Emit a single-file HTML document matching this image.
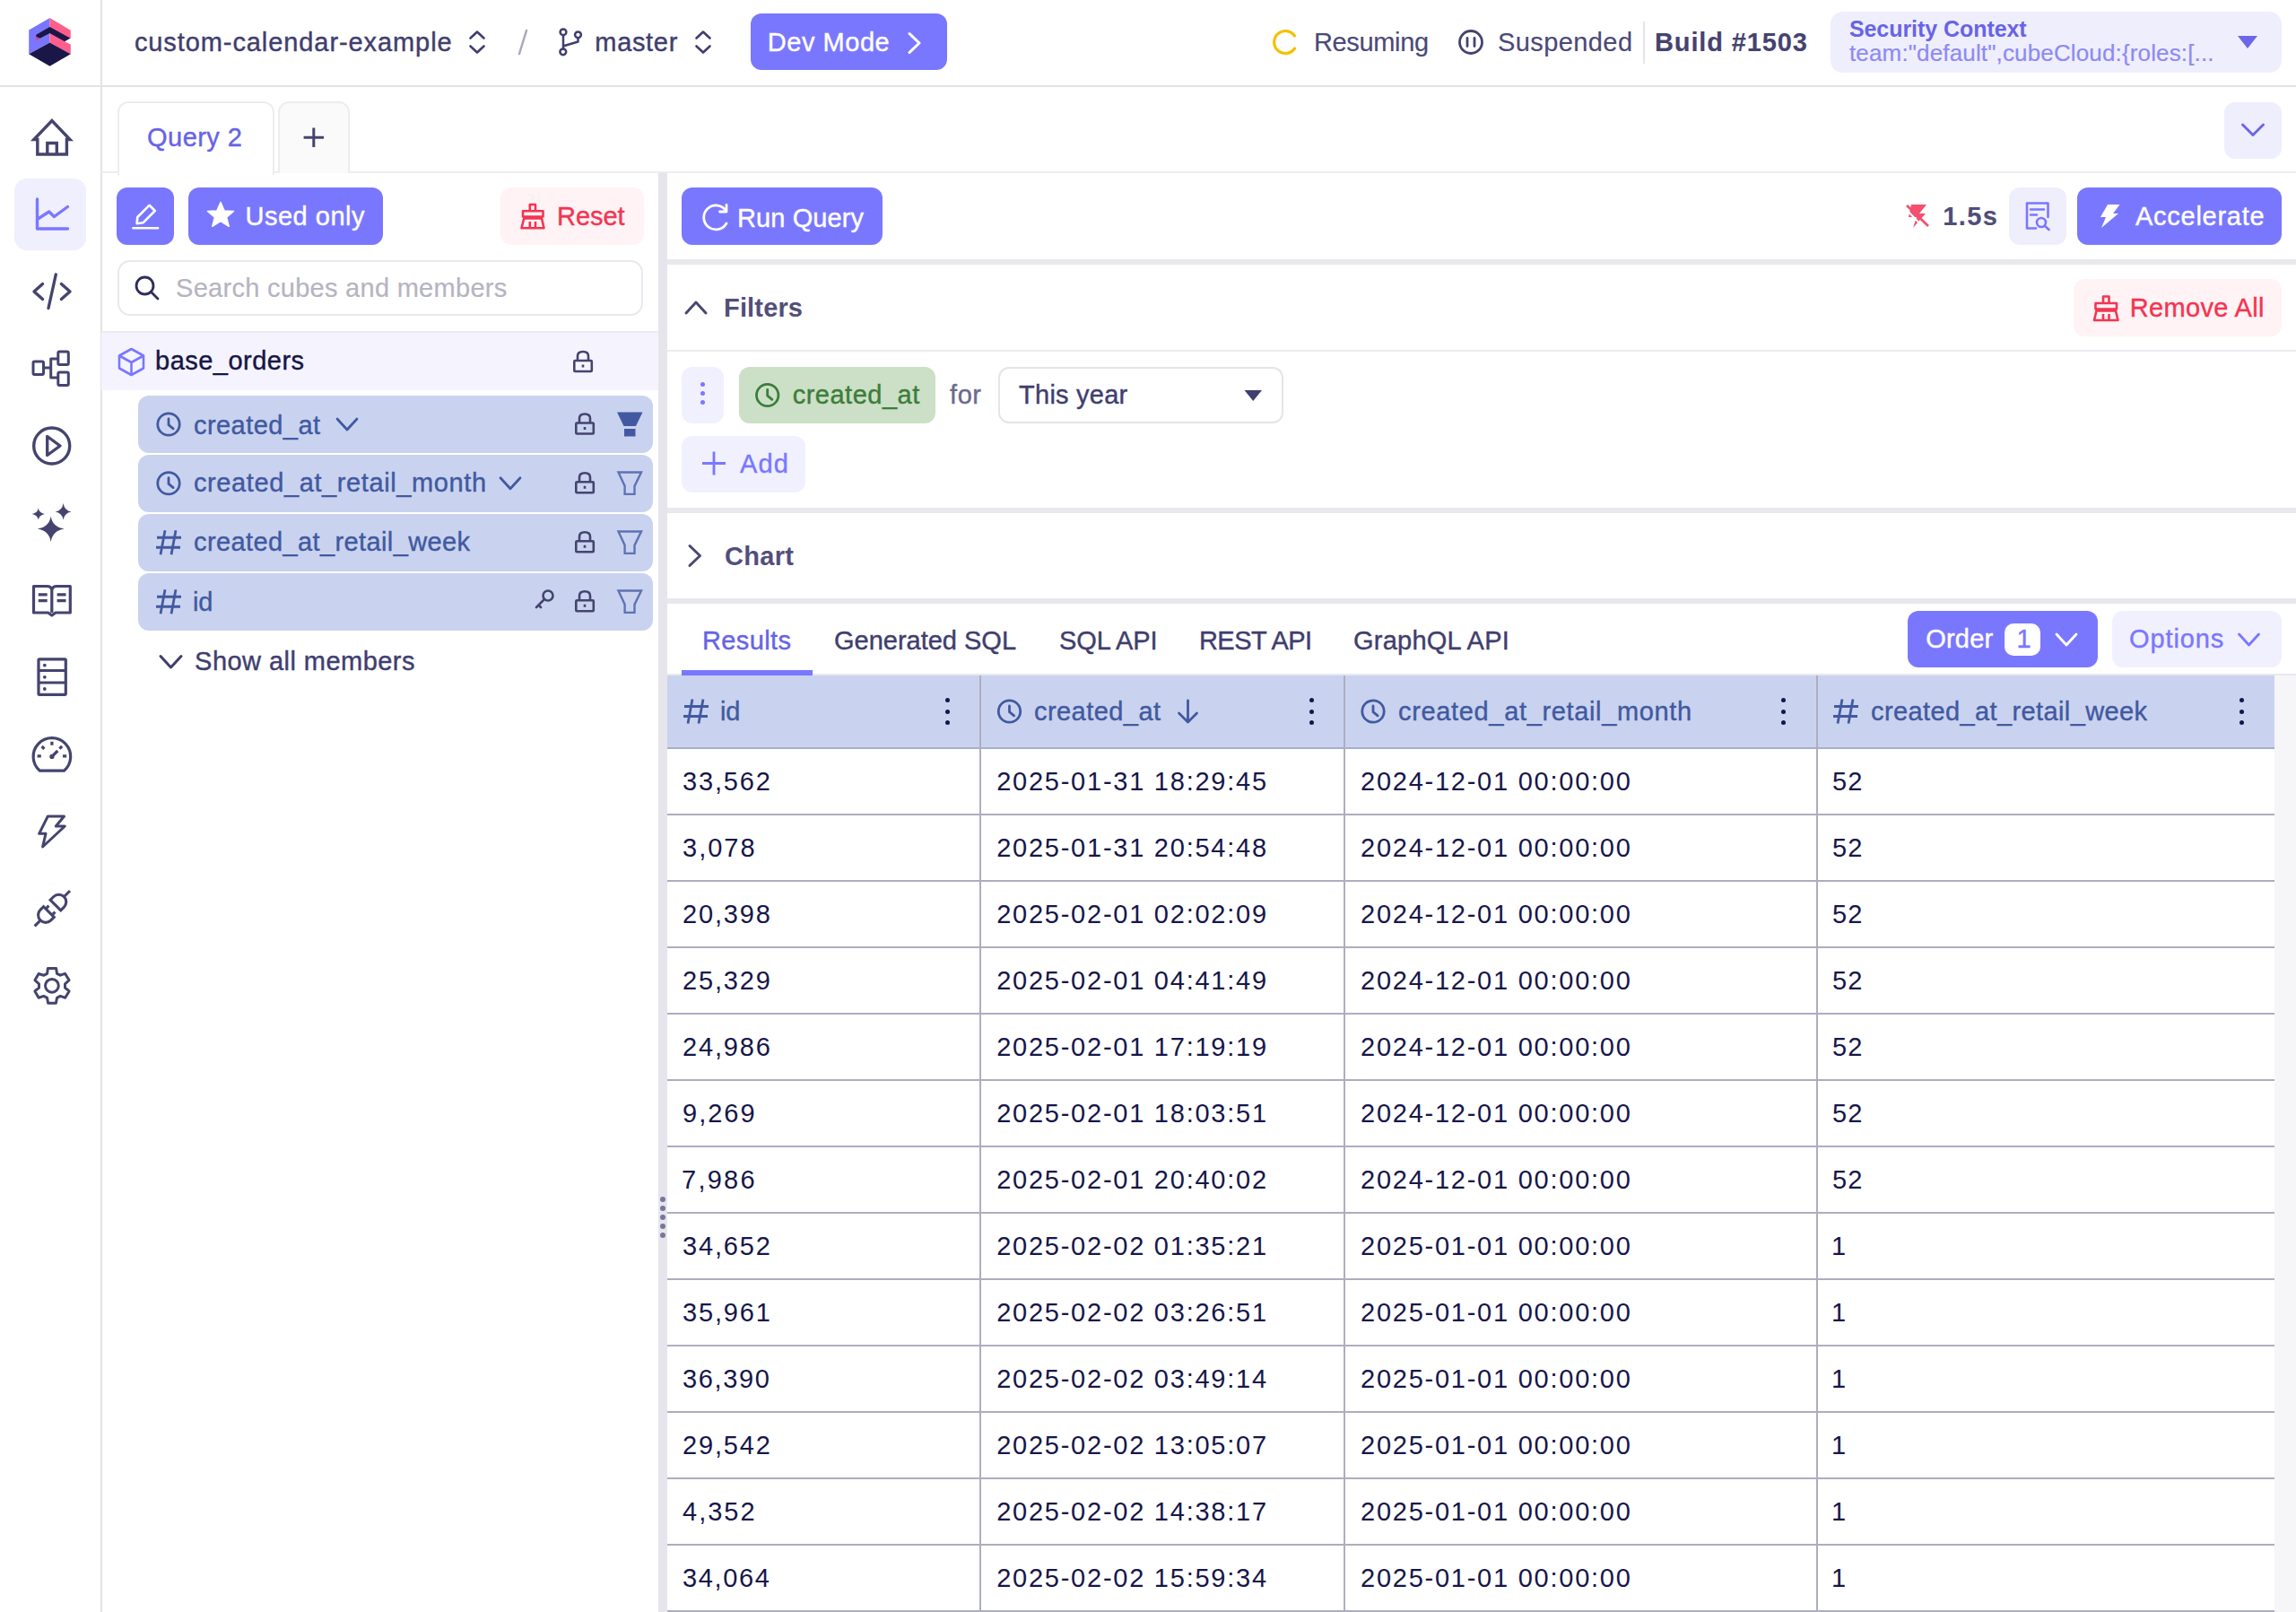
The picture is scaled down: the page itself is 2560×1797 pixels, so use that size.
<!DOCTYPE html>
<html><head><meta charset="utf-8">
<style>
html,body{margin:0;padding:0;width:2560px;height:1797px;overflow:hidden;background:#fff;font-family:"Liberation Sans",sans-serif;}
.a{position:absolute;}
.t{position:absolute;white-space:nowrap;font-size:28px;line-height:32px;letter-spacing:1px;-webkit-text-stroke:0.4px currentColor;}
.b{font-weight:bold;}
.bm{display:inline-block;width:0;height:0;}
svg{position:absolute;overflow:visible;}
</style></head><body>
<!-- HEADER -->
<div class="a" style="left:0;top:95px;width:2560px;height:2px;background:#E3E3E6"></div>
<div class="a" style="left:112px;top:0;width:2px;height:1797px;background:#E3E3E6"></div>
<svg style="left:0;top:0" width="113" height="94">
  <polygon points="55.5,20 32.2,33.5 32.2,60.2 55.5,47.5" fill="#7A76FF"/>
  <polygon points="55.5,20 78.8,33.7 78.8,60.2 55.5,47.5" fill="#FF5F8C"/>
  <polygon points="32.2,60.2 55.5,47.5 78.8,60.2 55.5,73.7" fill="#1A1748"/>
  <polygon points="40.3,38.7 55.5,30 78.3,42.6 72.2,46.2 55.5,37 44.5,42.8 40.3,41" fill="#1A1748"/>
  <polygon points="40.3,41 44.5,42.8 40.3,45.6" fill="#D9466A"/>
  <polygon points="79.5,42.2 72.2,46.2 79.5,50" fill="#fff"/>
</svg>
<svg style="left:0;top:0" width="1" height="1"><path d="M524.5,42.5 L532,35.5 L539.5,42.5 M524.5,51.5 L532,58.5 L539.5,51.5" fill="none" stroke="#403E6E" stroke-width="2.6" stroke-linecap="round" stroke-linejoin="round"/></svg>
<svg style="left:0;top:0" width="1" height="1"><path d="M587,34 L579,60" fill="none" stroke="#A9A8BC" stroke-width="2.5" stroke-linecap="round"/></svg>
<svg style="left:0;top:0" width="1" height="1" fill="none" stroke="#403E6E" stroke-width="2.5" stroke-linecap="round" stroke-linejoin="round">
  <circle cx="628" cy="35.8" r="3.4"/><circle cx="627.8" cy="57.8" r="3.4"/><circle cx="644.5" cy="38.8" r="3.4"/>
  <path d="M628,39.2 V54.4 M644.5,42.2 V46.5 L628.5,51.2"/>
</svg>
<svg style="left:0;top:0" width="1" height="1"><path d="M776.5,42.5 L784,35.5 L791.5,42.5 M776.5,51.5 L784,58.5 L791.5,51.5" fill="none" stroke="#403E6E" stroke-width="2.6" stroke-linecap="round" stroke-linejoin="round"/></svg>
<div class="a" style="left:837px;top:15px;width:219px;height:63px;background:#7A77FF;border-radius:12px"></div>
<svg style="left:0;top:0" width="1" height="1"><path d="M1014,37.5 L1025,48 L1014,58.5" fill="none" stroke="#fff" stroke-width="3" stroke-linecap="round" stroke-linejoin="round"/></svg>

<svg style="left:0;top:0" width="1" height="1"><path d="M1443.5,40 A12.5,12.5 0 1 0 1443.5,54" fill="none" stroke="#F5C000" stroke-width="3.2" stroke-linecap="round"/></svg>
<svg style="left:0;top:0" width="1" height="1" fill="none" stroke="#45436F" stroke-width="2.8" stroke-linecap="round"><circle cx="1640" cy="47" r="12.5"/><path d="M1636,42.5 V51.5 M1644,42.5 V51.5"/></svg>
<div class="a" style="left:1832px;top:24px;width:2px;height:47px;background:#E4E4EA"></div>
<div class="a" style="left:2041px;top:13px;width:503px;height:68px;background:#EFEEFD;border-radius:14px"></div>
<svg style="left:0;top:0" width="1" height="1"><path d="M2495,40 L2517,40 L2506,54 Z" fill="#6B67E8"/></svg>

<!-- SIDEBAR -->
<div class="a" style="left:16px;top:199px;width:80px;height:80px;background:#F0EFFD;border-radius:14px"></div>
<svg style="left:0;top:0" width="1" height="1" fill="none" stroke="#45446F" stroke-width="3.4" stroke-linejoin="miter" stroke-linecap="butt">
  <path d="M41.8,155.5 H37.8 L57.9,134.5 L78,155.5 H74.4 V172 H41.8 Z M52.8,172 V159.5 H63.3 V172"/>
</svg>
<svg style="left:0;top:0" width="1" height="1" fill="none" stroke="#7A77FF" stroke-width="3.4" stroke-linecap="round" stroke-linejoin="round">
  <path d="M41.5,222 V255 H75.5 M41.5,244.5 L54.7,236 L60.4,241.5 L75.4,230.5"/>
</svg>
<svg style="left:0;top:0" width="1" height="1" fill="none" stroke="#45446F" stroke-width="3.4" stroke-linecap="round" stroke-linejoin="round">
  <path d="M47.5,316.5 L38,325 L47.5,333.5 M68.4,316.5 L78,325 L68.4,333.5 M62.3,306 L54,343.5"/>
</svg>
<svg style="left:0;top:0" width="1" height="1" fill="none" stroke="#45446F" stroke-width="3" stroke-linejoin="round">
  <rect x="37" y="403" width="11.5" height="14.5" rx="1.5"/>
  <rect x="64.8" y="392" width="11.5" height="14.5" rx="1.5"/>
  <rect x="64.8" y="415" width="11.5" height="14.5" rx="1.5"/>
  <path d="M48.5,410 H56.7 M64.8,400 H56.7 V421 H64.8"/>
</svg>
<svg style="left:0;top:0" width="1" height="1" fill="none" stroke="#45446F" stroke-width="3.4" stroke-linejoin="round">
  <circle cx="57.7" cy="497" r="20"/>
  <path d="M52.7,486.5 L67,497 L52.7,507.5 Z"/>
</svg>
<svg style="left:0;top:0" width="1" height="1" fill="#45446F">
  <path d="M56.7,575.5 Q58.5,587.5 71.6,589.5 Q58.5,591.5 56.7,604.3 Q54.9,591.5 41.8,589.5 Q54.9,587.5 56.7,575.5 Z"/>
  <path d="M70.6,561 Q71.8,569.2 79.5,570.6 Q71.8,572 70.6,579.5 Q69.4,572 61.6,570.6 Q69.4,569.2 70.6,561 Z"/>
  <path d="M42.8,566.5 Q43.6,571.7 49.7,573 Q43.6,574.3 42.8,579.5 Q42,574.3 35.8,573 Q42,571.7 42.8,566.5 Z"/>
</svg>
<svg style="left:0;top:0" width="1" height="1" fill="none" stroke="#45446F" stroke-width="3.2" stroke-linejoin="round">
  <path d="M37.5,653.5 H52 Q57.5,653.5 57.8,658 Q58.2,653.5 63.5,653.5 H78.3 V683 H62 L57.8,686 L53.6,683 H37.5 Z M57.8,658 V683"/>
  <path d="M42.8,662.8 H52.7 M42.8,669.7 H52.7 M63.6,662.8 H73.5 M63.6,669.7 H73.5"/>
</svg>
<svg style="left:0;top:0" width="1" height="1" fill="none" stroke="#45446F" stroke-width="3.2" stroke-linejoin="round">
  <rect x="43" y="734.8" width="30.3" height="39.5" rx="1"/>
  <path d="M43,747.5 H73.3 M43,761 H73.3"/>
  <circle cx="49.8" cy="741.6" r="1.9" fill="#45446F" stroke="none"/><circle cx="49.8" cy="754.8" r="1.9" fill="#45446F" stroke="none"/><circle cx="49.8" cy="768" r="1.9" fill="#45446F" stroke="none"/>
</svg>
<svg style="left:0;top:0" width="1" height="1" fill="none" stroke="#45446F" stroke-width="3.2" stroke-linecap="butt" stroke-linejoin="round">
  <path d="M44.4,859.2 A20.8,20.8 0 1 1 71.4,859.2 Z"/>
  <path d="M57.9,826.8 V830.8 M41.6,842.9 H45.8 M70,842.9 H74.2 M46.6,832 L49.4,834.8 M66.4,834.6 L69.2,831.8 M57.9,843.4 L64.3,837"/>
  <circle cx="57.9" cy="843.4" r="2.6" fill="#45446F" stroke="none"/>
</svg>
<svg style="left:0;top:0" width="1" height="1" fill="none" stroke="#45446F" stroke-width="3" stroke-linejoin="round">
  <path d="M53.3,910 H71.5 L62.3,921 H72.3 L47.6,944 L51,929.3 H43.6 Z"/>
</svg>
<svg style="left:0;top:0" width="1" height="1" fill="none" stroke="#45446F" stroke-width="1.33" stroke-linecap="butt" stroke-linejoin="miter"><g transform="translate(30.24,984.84) scale(2.33)">
<path d="M7.89 11.11l5 5l-1.5 1.5a3.536 3.536 0 1 1 -5 -5l1.5 -1.5z"/><path d="M16.11 12.89l-5 -5l1.5 -1.5a3.536 3.536 0 1 1 5 5l-1.5 1.5z"/><path d="M3.6 20.4L6.39 17.61"/><path d="M17.61 6.39L20.5 3.5"/><path d="M10.39 10.61l-1.5 1.5"/><path d="M13.39 13.61l-1.5 1.5"/></g></svg>
<svg style="left:0;top:0" width="1" height="1" fill="none" stroke="#45446F" stroke-width="3" stroke-linejoin="round">
  <path d="M53.4,1079.4 H62.6 L63.5,1085.3 L67.2,1087.2 L72.5,1085.3 L77.1,1092.7 L72.5,1096.8 V1101 L77.1,1104.9 L72.7,1112.2 L67.2,1110.4 L63.5,1112.4 L62.4,1118.3 H53.6 L52.6,1112.4 L48.7,1110.4 L43.1,1112.2 L38.9,1104.9 L43.5,1101 V1096.8 L38.9,1092.7 L43.1,1085.5 L48.7,1087.3 L52.6,1085.3 Z"/>
  <circle cx="57.9" cy="1098.8" r="7.4"/>
</svg>

<!-- TABS -->
<div class="a" style="left:113px;top:191px;width:2447px;height:2px;background:#EDEDF0"></div>
<div class="a" style="left:131px;top:113px;width:171px;height:80px;background:#fff;border:2px solid #EDEDF0;border-bottom:none;border-radius:12px 12px 0 0;box-sizing:content-box"></div>
<div class="a" style="left:310px;top:113px;width:76px;height:78px;background:#FAFAFB;border:2px solid #EDEDF0;border-bottom:none;border-radius:12px 12px 0 0"></div>
<svg style="left:0;top:0" width="1" height="1"><path d="M338.6,153.2 H361 M349.8,142.4 V164.1" fill="none" stroke="#45446F" stroke-width="3"/></svg>
<div class="a" style="left:2480px;top:114px;width:64px;height:63px;background:#EFEEFD;border-radius:12px"></div>
<svg style="left:0;top:0" width="1" height="1"><path d="M2500.5,139 L2512,150.5 L2523.5,139" fill="none" stroke="#6B67E8" stroke-width="3" stroke-linecap="round" stroke-linejoin="round"/></svg>

<!-- LEFT PANEL -->
<div class="a" style="left:130px;top:209px;width:64px;height:64px;background:#7A77FF;border-radius:12px"></div>
<svg style="left:0;top:0" width="1" height="1" fill="none" stroke="#fff" stroke-width="2.6" stroke-linejoin="round" stroke-linecap="round">
  <path d="M166.5,228.8 L172.8,235 L159.5,248.3 L152.6,249.2 L153.3,242 Z"/>
  <path d="M148.5,254.3 H176"/>
</svg>
<div class="a" style="left:210px;top:209px;width:217px;height:64px;background:#7A77FF;border-radius:12px"></div>
<svg style="left:0;top:0" width="1" height="1"><path d="M246,225.5 L250.2,235 L260.5,235.5 L252.6,242.2 L255.2,252.3 L246,246.7 L236.8,252.3 L239.4,242.2 L231.5,235.5 L241.8,235 Z" fill="#fff" stroke="#fff" stroke-width="1.5" stroke-linejoin="round"/></svg>
<div class="a" style="left:558px;top:209px;width:160px;height:64px;background:#FFF3F5;border-radius:12px"></div>
<svg style="left:0;top:0" width="1" height="1" fill="none" stroke="#F33551" stroke-width="2.6" stroke-linejoin="round">
  <path d="M590.8,235.3 V228 H597 V235.3 M583,235.3 H605.5 V241.5 H583 Z M584.2,243.5 H604 L606.5,254.2 H581.5 Z M590.8,247 V254 M597,247 V254"/>
</svg>
<div class="a" style="left:131px;top:290px;width:582px;height:58px;border:2px solid #E8E8EE;border-radius:14px"></div>
<svg style="left:0;top:0" width="1" height="1" fill="none" stroke="#2F2D5C" stroke-width="2.8" stroke-linecap="round"><circle cx="161.5" cy="318.5" r="9.5"/><path d="M168.5,325.5 L176,333"/></svg>
<div class="a" style="left:113px;top:369px;width:621px;height:2px;background:#EBEBF0"></div>
<div class="a" style="left:113px;top:371px;width:621px;height:64px;background:#F5F4FE"></div>
<svg style="left:0;top:0" width="1" height="1" fill="none" stroke="#7A77FF" stroke-width="2.6" stroke-linejoin="round">
  <path d="M146.5,389 L160,396.5 V410.5 L146.5,418 L133,410.5 V396.5 Z M133,396.5 L146.5,404 L160,396.5 M146.5,404 V418"/>
</svg>
<svg style="left:0;top:0" width="1" height="1" fill="none" stroke="#45446F" stroke-width="2.6"><rect x="640.3" y="402" width="19.5" height="12" rx="1"/><path d="M644,402 V397 Q644,392 650,392 Q656,392 656,397 V402 M650,406.5 V409.5"/></svg>

<div class="a" style="left:154px;top:441px;width:574px;height:64px;background:#C9D3EF;border-radius:12px"></div>
<svg style="left:0;top:0" width="1" height="1" fill="none" stroke="#4259A1" stroke-width="2.8" stroke-linecap="round"><circle cx="188" cy="473.0" r="12.2"/><path d="M188,466.9 V473.61 L193.124,477.88"/></svg>
<svg style="left:0;top:0" width="1" height="1"><path d="M376,467.0 L387.0,479.0 L398,467.0" fill="none" stroke="#4259A1" stroke-width="2.8" stroke-linecap="round" stroke-linejoin="round"/></svg>
<svg style="left:0;top:0" width="1" height="1" fill="none" stroke="#45446F" stroke-width="2.6"><rect x="642.3" y="471.5" width="19.5" height="12" rx="1"/><path d="M646,471.5 V466.5 Q646,461.5 652,461.5 Q658,461.5 658,466.5 V471.5 M652,476.0 V479.0"/></svg>
<svg style="left:0;top:0" width="1" height="1" fill="#4259A1"><path d="M688,459.5 H716.5 L709,475.0 H695.5 Z"/><rect x="696" y="478.0" width="12.5" height="8.5"/></svg>
<div class="a" style="left:154px;top:507px;width:574px;height:63.5px;background:#C9D3EF;border-radius:12px"></div>
<svg style="left:0;top:0" width="1" height="1" fill="none" stroke="#4259A1" stroke-width="2.8" stroke-linecap="round"><circle cx="188" cy="538.75" r="12.2"/><path d="M188,532.65 V539.36 L193.124,543.63"/></svg>
<svg style="left:0;top:0" width="1" height="1"><path d="M558,532.75 L569.0,544.75 L580,532.75" fill="none" stroke="#4259A1" stroke-width="2.8" stroke-linecap="round" stroke-linejoin="round"/></svg>
<svg style="left:0;top:0" width="1" height="1" fill="none" stroke="#45446F" stroke-width="2.6"><rect x="642.3" y="537.25" width="19.5" height="12" rx="1"/><path d="M646,537.25 V532.25 Q646,527.25 652,527.25 Q658,527.25 658,532.25 V537.25 M652,541.75 V544.75"/></svg>
<svg style="left:0;top:0" width="1" height="1" fill="none" stroke="#5F72B4" stroke-width="2.4" stroke-linejoin="miter"><path d="M689.5,526.55 H715 L707.5,541.85 V550.85 H696.6 V541.85 Z"/></svg>
<div class="a" style="left:154px;top:573px;width:574px;height:63.5px;background:#C9D3EF;border-radius:12px"></div>
<svg style="left:0;top:0" width="1" height="1" fill="none" stroke="#4259A1" stroke-width="2.8" stroke-linecap="butt"><path d="M184.0,591.25 L179.0,618.25 M196.0,591.25 L191.0,618.25 M175.0,599.25 H202.0 M174,610.25 H201.0"/></svg>
<svg style="left:0;top:0" width="1" height="1" fill="none" stroke="#45446F" stroke-width="2.6"><rect x="642.3" y="603.25" width="19.5" height="12" rx="1"/><path d="M646,603.25 V598.25 Q646,593.25 652,593.25 Q658,593.25 658,598.25 V603.25 M652,607.75 V610.75"/></svg>
<svg style="left:0;top:0" width="1" height="1" fill="none" stroke="#5F72B4" stroke-width="2.4" stroke-linejoin="miter"><path d="M689.5,592.55 H715 L707.5,607.85 V616.85 H696.6 V607.85 Z"/></svg>
<div class="a" style="left:154px;top:639px;width:574px;height:63.5px;background:#C9D3EF;border-radius:12px"></div>
<svg style="left:0;top:0" width="1" height="1" fill="none" stroke="#4259A1" stroke-width="2.8" stroke-linecap="butt"><path d="M184.0,657.25 L179.0,684.25 M196.0,657.25 L191.0,684.25 M175.0,665.25 H202.0 M174,676.25 H201.0"/></svg>
<svg style="left:0;top:0" width="1" height="1" fill="none" stroke="#45446F" stroke-width="2.6"><rect x="642.3" y="669.25" width="19.5" height="12" rx="1"/><path d="M646,669.25 V664.25 Q646,659.25 652,659.25 Q658,659.25 658,664.25 V669.25 M652,673.75 V676.75"/></svg>
<svg style="left:0;top:0" width="1" height="1" fill="none" stroke="#5F72B4" stroke-width="2.4" stroke-linejoin="miter"><path d="M689.5,658.55 H715 L707.5,673.85 V682.85 H696.6 V673.85 Z"/></svg>
<svg style="left:0;top:0" width="1" height="1" fill="none" stroke="#45446F" stroke-width="2.6" stroke-linecap="round"><circle cx="611" cy="664" r="5.5"/><path d="M607,668 L598,677 M600.5,674.5 L603,677"/></svg>
<svg style="left:0;top:0" width="1" height="1"><path d="M179,731.5 L190.5,744 L202,731.5" fill="none" stroke="#403E6E" stroke-width="3" stroke-linecap="round" stroke-linejoin="round"/></svg>
<div class="a" style="left:734px;top:193px;width:10px;height:1604px;background:#E6E5EC"></div>
<div class="a" style="left:736px;top:1334px;width:6px;height:6px;border-radius:3px;background:#77769B"></div>
<div class="a" style="left:736px;top:1344px;width:6px;height:6px;border-radius:3px;background:#77769B"></div>
<div class="a" style="left:736px;top:1354px;width:6px;height:6px;border-radius:3px;background:#77769B"></div>
<div class="a" style="left:736px;top:1364px;width:6px;height:6px;border-radius:3px;background:#77769B"></div>
<div class="a" style="left:736px;top:1374px;width:6px;height:6px;border-radius:3px;background:#77769B"></div>
<div class="a" style="left:760px;top:209px;width:224px;height:64px;background:#7A77FF;border-radius:12px"></div>
<svg style="left:0;top:0" width="1" height="1" fill="none" stroke="#fff" stroke-width="2.8" stroke-linecap="round" stroke-linejoin="round"><path d="M809.5,235 A13.5,13.5 0 1 0 810,249"/><path d="M810,228.5 V236 H802.5"/></svg>
<svg style="left:0;top:0" width="1" height="1"><path d="M2131,228 H2148 L2140,238 H2147 L2133,254 L2137,242 H2128 Z" fill="#F2506E"/><path d="M2126,229 L2150,252" stroke="#F2506E" stroke-width="2.8"/><path d="M2124,232 L2146,255" stroke="#fff" stroke-width="2"/></svg>
<div class="a" style="left:2240px;top:209px;width:64px;height:64px;background:#EFEEFD;border-radius:12px"></div>
<svg style="left:0;top:0" width="1" height="1" fill="none" stroke="#7A77FF" stroke-width="2.6" stroke-linejoin="round" stroke-linecap="round"><path d="M2270,254.5 H2260 V226.5 H2283.5 V242"/><path d="M2264,233.5 H2279 M2264,239.5 H2271"/><circle cx="2276" cy="248" r="5"/><path d="M2280,252 L2284.5,256"/></svg>
<div class="a" style="left:2316px;top:209px;width:228px;height:64px;background:#7A77FF;border-radius:12px"></div>
<svg style="left:0;top:0" width="1" height="1"><path d="M2350,228 H2363.5 L2356,238 H2362 L2343,254 L2348,242 H2342 Z" fill="#fff"/></svg>
<div class="a" style="left:744px;top:289px;width:1816px;height:6px;background:#E8E8ED"></div>
<svg style="left:0;top:0" width="1" height="1"><path d="M765,349 L776.0,337 L787,349" fill="none" stroke="#4A4870" stroke-width="3" stroke-linecap="round" stroke-linejoin="round"/></svg>
<div class="a" style="left:2312px;top:311px;width:232px;height:64px;background:#FFF3F5;border-radius:12px"></div>
<svg style="left:0;top:0" width="1" height="1" fill="none" stroke="#F33551" stroke-width="2.6" stroke-linejoin="round"><path d="M2345,338 V330.5 H2351.5 V338 M2336.5,338 H2360 V344.5 H2336.5 Z M2337.5,346.5 H2359 L2361.5,357 H2335 Z M2345,350 V357 M2351.5,350 V357"/></svg>
<div class="a" style="left:744px;top:390px;width:1816px;height:2px;background:#EBEBF0"></div>
<div class="a" style="left:760px;top:409px;width:47px;height:63px;background:#F1F0FE;border-radius:12px"></div>
<div class="a" style="left:781px;top:426px;width:5px;height:5px;border-radius:3px;background:#7A77FF"></div>
<div class="a" style="left:781px;top:436px;width:5px;height:5px;border-radius:3px;background:#7A77FF"></div>
<div class="a" style="left:781px;top:446px;width:5px;height:5px;border-radius:3px;background:#7A77FF"></div>
<div class="a" style="left:824px;top:409px;width:219px;height:63px;background:#CBE0C6;border-radius:12px"></div>
<svg style="left:0;top:0" width="1" height="1" fill="none" stroke="#3C7D3B" stroke-width="2.8" stroke-linecap="round"><circle cx="855.7" cy="440.5" r="12.2"/><path d="M855.7,434.4 V441.11 L860.8240000000001,445.38"/></svg>
<div class="a" style="left:1112.5px;top:409px;width:314.5px;height:59px;border:2px solid #E4E4EA;border-radius:12px"></div>
<svg style="left:0;top:0" width="1" height="1"><path d="M1387.5,435 H1407 L1397.25,447 Z" fill="#403E6E"/></svg>
<div class="a" style="left:760px;top:485.5px;width:138px;height:63px;background:#F1F0FE;border-radius:12px"></div>
<svg style="left:0;top:0" width="1" height="1"><path d="M783,516.5 H809 M796,503.5 V529.5" fill="none" stroke="#7A77FF" stroke-width="2.8"/></svg>
<div class="a" style="left:744px;top:566px;width:1816px;height:6px;background:#E8E8ED"></div>
<svg style="left:0;top:0" width="1" height="1"><path d="M769,608.5 L780.5,619.5 L769,630.5" fill="none" stroke="#4A4870" stroke-width="3" stroke-linecap="round" stroke-linejoin="round"/></svg>
<div class="a" style="left:744px;top:667px;width:1816px;height:6px;background:#E8E8ED"></div>
<div class="a" style="left:744px;top:751px;width:1816px;height:2px;background:#E8E8EE"></div>
<div class="a" style="left:760px;top:747px;width:146px;height:6px;background:#7A77FF"></div>
<div class="a" style="left:2127px;top:681px;width:212px;height:63px;background:#7A77FF;border-radius:12px"></div>
<div class="a" style="left:2234.5px;top:695px;width:40.5px;height:36px;background:#fff;border-radius:10px"></div>
<svg style="left:0;top:0" width="1" height="1"><path d="M2293,707 L2304.0,719 L2315,707" fill="none" stroke="#fff" stroke-width="2.8" stroke-linecap="round" stroke-linejoin="round"/></svg>
<div class="a" style="left:2355px;top:681px;width:189px;height:63px;background:#F1F0FE;border-radius:12px"></div>
<svg style="left:0;top:0" width="1" height="1"><path d="M2496.5,707 L2507.5,719 L2518.5,707" fill="none" stroke="#7A77FF" stroke-width="2.8" stroke-linecap="round" stroke-linejoin="round"/></svg>
<div class="a" style="left:744px;top:753px;width:1792px;height:80px;background:#C9D3EF"></div>
<div class="a" style="left:2536px;top:753px;width:24px;height:1044px;background:#F6F6F8"></div>
<div class="a" style="left:744px;top:833px;width:1792px;height:2px;background:#A8AFC8"></div>
<div class="a" style="left:744px;top:907px;width:1792px;height:2px;background:#AEADBF"></div>
<div class="a" style="left:744px;top:981px;width:1792px;height:2px;background:#AEADBF"></div>
<div class="a" style="left:744px;top:1055px;width:1792px;height:2px;background:#AEADBF"></div>
<div class="a" style="left:744px;top:1129px;width:1792px;height:2px;background:#AEADBF"></div>
<div class="a" style="left:744px;top:1203px;width:1792px;height:2px;background:#AEADBF"></div>
<div class="a" style="left:744px;top:1277px;width:1792px;height:2px;background:#AEADBF"></div>
<div class="a" style="left:744px;top:1351px;width:1792px;height:2px;background:#AEADBF"></div>
<div class="a" style="left:744px;top:1425px;width:1792px;height:2px;background:#AEADBF"></div>
<div class="a" style="left:744px;top:1499px;width:1792px;height:2px;background:#AEADBF"></div>
<div class="a" style="left:744px;top:1573px;width:1792px;height:2px;background:#AEADBF"></div>
<div class="a" style="left:744px;top:1647px;width:1792px;height:2px;background:#AEADBF"></div>
<div class="a" style="left:744px;top:1721px;width:1792px;height:2px;background:#AEADBF"></div>
<div class="a" style="left:744px;top:1795px;width:1792px;height:2px;background:#AEADBF"></div>
<div class="a" style="left:1092px;top:753px;width:2px;height:1044px;background:#AEADBF"></div>
<div class="a" style="left:1498px;top:753px;width:2px;height:1044px;background:#AEADBF"></div>
<div class="a" style="left:2025px;top:753px;width:2px;height:1044px;background:#AEADBF"></div>
<svg style="left:0;top:0" width="1" height="1" fill="none" stroke="#4259A1" stroke-width="2.8" stroke-linecap="butt"><path d="M772.0,779.5 L767.0,806.5 M784.0,779.5 L779.0,806.5 M763.0,787.5 H790.0 M762,798.5 H789.0"/></svg>
<svg style="left:0;top:0" width="1" height="1" fill="none" stroke="#4259A1" stroke-width="2.8" stroke-linecap="round"><circle cx="1125.5" cy="793" r="12.2"/><path d="M1125.5,786.9 V793.61 L1130.624,797.88"/></svg>
<svg style="left:0;top:0" width="1" height="1" fill="none" stroke="#4259A1" stroke-width="2.8" stroke-linecap="round" stroke-linejoin="round"><path d="M1324.5,781 V805 M1314.5,795 L1324.5,805 L1334.5,795"/></svg>
<svg style="left:0;top:0" width="1" height="1" fill="none" stroke="#4259A1" stroke-width="2.8" stroke-linecap="round"><circle cx="1531" cy="793" r="12.2"/><path d="M1531,786.9 V793.61 L1536.124,797.88"/></svg>
<svg style="left:0;top:0" width="1" height="1" fill="none" stroke="#4259A1" stroke-width="2.8" stroke-linecap="butt"><path d="M2054.0,779.5 L2049.0,806.5 M2066.0,779.5 L2061.0,806.5 M2045.0,787.5 H2072.0 M2044,798.5 H2071.0"/></svg>
<div class="a" style="left:1053.5px;top:778.0px;width:5px;height:5px;border-radius:3px;background:#16164A"></div>
<div class="a" style="left:1053.5px;top:790.5px;width:5px;height:5px;border-radius:3px;background:#16164A"></div>
<div class="a" style="left:1053.5px;top:803.0px;width:5px;height:5px;border-radius:3px;background:#16164A"></div>
<div class="a" style="left:1459.5px;top:778.0px;width:5px;height:5px;border-radius:3px;background:#16164A"></div>
<div class="a" style="left:1459.5px;top:790.5px;width:5px;height:5px;border-radius:3px;background:#16164A"></div>
<div class="a" style="left:1459.5px;top:803.0px;width:5px;height:5px;border-radius:3px;background:#16164A"></div>
<div class="a" style="left:1986.0px;top:778.0px;width:5px;height:5px;border-radius:3px;background:#16164A"></div>
<div class="a" style="left:1986.0px;top:790.5px;width:5px;height:5px;border-radius:3px;background:#16164A"></div>
<div class="a" style="left:1986.0px;top:803.0px;width:5px;height:5px;border-radius:3px;background:#16164A"></div>
<div class="a" style="left:2497.0px;top:778.0px;width:5px;height:5px;border-radius:3px;background:#16164A"></div>
<div class="a" style="left:2497.0px;top:790.5px;width:5px;height:5px;border-radius:3px;background:#16164A"></div>
<div class="a" style="left:2497.0px;top:803.0px;width:5px;height:5px;border-radius:3px;background:#16164A"></div>
<div class="t" style="left:149.90px;top:28.80px;font-size:29px;line-height:36px;font-weight:normal;color:#403E6E;letter-spacing:0.914px;-webkit-text-stroke:0.4px #403E6E">custom-calendar-example</div>
<div class="t" style="left:663.30px;top:29.01px;font-size:29px;line-height:36px;font-weight:normal;color:#403E6E;letter-spacing:0.675px;-webkit-text-stroke:0.4px #403E6E">master</div>
<div class="t" style="left:855.80px;top:29.01px;font-size:29px;line-height:36px;font-weight:normal;color:#fff;letter-spacing:0.535px;-webkit-text-stroke:0.4px #fff">Dev Mode</div>
<div class="t" style="left:1464.90px;top:28.80px;font-size:29px;line-height:36px;font-weight:normal;color:#4B4977;letter-spacing:-0.333px;-webkit-text-stroke:0.15px #4B4977">Resuming</div>
<div class="t" style="left:1670.00px;top:29.01px;font-size:29px;line-height:36px;font-weight:normal;color:#4B4977;letter-spacing:0.410px;-webkit-text-stroke:0.15px #4B4977">Suspended</div>
<div class="t" style="left:1845.00px;top:29.01px;font-size:29px;line-height:36px;font-weight:bold;color:#45436F;letter-spacing:0.881px;-webkit-text-stroke:0.1px #45436F">Build #1503</div>
<div class="t" style="left:2061.90px;top:14.20px;font-size:25px;line-height:36px;font-weight:bold;color:#6864E6;letter-spacing:-0.058px;-webkit-text-stroke:0px #6864E6">Security Context</div>
<div class="t" style="left:2062.00px;top:41.22px;font-size:26px;line-height:36px;font-weight:normal;color:#8D8AF2;letter-spacing:0.144px;-webkit-text-stroke:0.2px #8D8AF2">team:"default",cubeCloud:{roles:[...</div>
<div class="t" style="left:164.00px;top:134.71px;font-size:29px;line-height:36px;font-weight:normal;color:#6763E6;letter-spacing:0.474px;-webkit-text-stroke:0.4px #6763E6">Query 2</div>
<div class="t" style="left:273.50px;top:223.30px;font-size:29px;line-height:36px;font-weight:normal;color:#fff;letter-spacing:0.508px;-webkit-text-stroke:0.4px #fff">Used only</div>
<div class="t" style="left:621.10px;top:223.30px;font-size:29px;line-height:36px;font-weight:normal;color:#F33551;letter-spacing:-0.088px;-webkit-text-stroke:0.4px #F33551">Reset</div>
<div class="t" style="left:196.00px;top:303.40px;font-size:29px;line-height:36px;font-weight:normal;color:#B5B4C2;letter-spacing:0.285px;-webkit-text-stroke:0.2px #B5B4C2">Search cubes and members</div>
<div class="t" style="left:173.10px;top:384.01px;font-size:29px;line-height:36px;font-weight:normal;color:#161646;letter-spacing:0.471px;-webkit-text-stroke:0.4px #161646">base_orders</div>
<div class="t" style="left:216.00px;top:455.51px;font-size:29px;line-height:36px;font-weight:normal;color:#4259A1;letter-spacing:0.441px;-webkit-text-stroke:0.4px #4259A1">created_at</div>
<div class="t" style="left:216.00px;top:520.21px;font-size:29px;line-height:36px;font-weight:normal;color:#4259A1;letter-spacing:0.604px;-webkit-text-stroke:0.4px #4259A1">created_at_retail_month</div>
<div class="t" style="left:216.00px;top:586.21px;font-size:29px;line-height:36px;font-weight:normal;color:#4259A1;letter-spacing:0.390px;-webkit-text-stroke:0.4px #4259A1">created_at_retail_week</div>
<div class="t" style="left:215.00px;top:652.61px;font-size:29px;line-height:36px;font-weight:normal;color:#4259A1;letter-spacing:-0.263px;-webkit-text-stroke:0.4px #4259A1">id</div>
<div class="t" style="left:217.10px;top:719.01px;font-size:29px;line-height:36px;font-weight:normal;color:#403E6E;letter-spacing:0.453px;-webkit-text-stroke:0.4px #403E6E">Show all members</div>
<div class="t" style="left:822.00px;top:224.51px;font-size:29px;line-height:36px;font-weight:normal;color:#fff;letter-spacing:0.098px;-webkit-text-stroke:0.4px #fff">Run Query</div>
<div class="t" style="left:2166.20px;top:222.61px;font-size:29px;line-height:36px;font-weight:bold;color:#504E78;letter-spacing:1.421px;-webkit-text-stroke:0.1px #504E78">1.5s</div>
<div class="t" style="left:2381.00px;top:222.51px;font-size:29px;line-height:36px;font-weight:normal;color:#fff;letter-spacing:0.733px;-webkit-text-stroke:0.4px #fff">Accelerate</div>
<div class="t" style="left:807.00px;top:324.61px;font-size:29px;line-height:36px;font-weight:bold;color:#514F7A;letter-spacing:0.161px;-webkit-text-stroke:0px #514F7A">Filters</div>
<div class="t" style="left:2374.70px;top:325.01px;font-size:29px;line-height:36px;font-weight:normal;color:#F33551;letter-spacing:0.338px;-webkit-text-stroke:0.4px #F33551">Remove All</div>
<div class="t" style="left:883.70px;top:422.21px;font-size:29px;line-height:36px;font-weight:normal;color:#3C7D3B;letter-spacing:0.497px;-webkit-text-stroke:0.4px #3C7D3B">created_at</div>
<div class="t" style="left:1059.00px;top:422.21px;font-size:29px;line-height:36px;font-weight:normal;color:#6B6A8E;letter-spacing:0.578px;-webkit-text-stroke:0.4px #6B6A8E">for</div>
<div class="t" style="left:1136.10px;top:422.21px;font-size:29px;line-height:36px;font-weight:normal;color:#403E6E;letter-spacing:0.231px;-webkit-text-stroke:0.4px #403E6E">This year</div>
<div class="t" style="left:824.90px;top:499.30px;font-size:29px;line-height:36px;font-weight:normal;color:#7A77FF;letter-spacing:1.253px;-webkit-text-stroke:0.4px #7A77FF">Add</div>
<div class="t" style="left:808.00px;top:602.01px;font-size:29px;line-height:36px;font-weight:bold;color:#514F7A;letter-spacing:0.320px;-webkit-text-stroke:0px #514F7A">Chart</div>
<div class="t" style="left:783.00px;top:695.51px;font-size:29px;line-height:36px;font-weight:normal;color:#6763E6;letter-spacing:0.385px;-webkit-text-stroke:0.4px #6763E6">Results</div>
<div class="t" style="left:930.00px;top:695.51px;font-size:29px;line-height:36px;font-weight:normal;color:#403E6E;letter-spacing:-0.010px;-webkit-text-stroke:0.4px #403E6E">Generated SQL</div>
<div class="t" style="left:1181.00px;top:695.51px;font-size:29px;line-height:36px;font-weight:normal;color:#403E6E;letter-spacing:-0.112px;-webkit-text-stroke:0.4px #403E6E">SQL API</div>
<div class="t" style="left:1337.00px;top:695.51px;font-size:29px;line-height:36px;font-weight:normal;color:#403E6E;letter-spacing:-0.576px;-webkit-text-stroke:0.4px #403E6E">REST API</div>
<div class="t" style="left:1509.00px;top:695.51px;font-size:29px;line-height:36px;font-weight:normal;color:#403E6E;letter-spacing:0.238px;-webkit-text-stroke:0.4px #403E6E">GraphQL API</div>
<div class="t" style="left:2147.20px;top:694.01px;font-size:29px;line-height:36px;font-weight:normal;color:#fff;letter-spacing:0.219px;-webkit-text-stroke:0.4px #fff">Order</div>
<div class="t" style="left:2248.50px;top:694.01px;font-size:29px;line-height:36px;font-weight:normal;color:#7A77FF;letter-spacing:0.000px;-webkit-text-stroke:0.4px #7A77FF">1</div>
<div class="t" style="left:2374.10px;top:694.01px;font-size:29px;line-height:36px;font-weight:normal;color:#7A77FF;letter-spacing:0.860px;-webkit-text-stroke:0.4px #7A77FF">Options</div>
<div class="t" style="left:803.00px;top:775.01px;font-size:29px;line-height:36px;font-weight:normal;color:#4259A1;letter-spacing:-0.263px;-webkit-text-stroke:0.4px #4259A1">id</div>
<div class="t" style="left:1153.00px;top:775.01px;font-size:29px;line-height:36px;font-weight:normal;color:#4259A1;letter-spacing:0.441px;-webkit-text-stroke:0.4px #4259A1">created_at</div>
<div class="t" style="left:1559.10px;top:775.01px;font-size:29px;line-height:36px;font-weight:normal;color:#4259A1;letter-spacing:0.649px;-webkit-text-stroke:0.4px #4259A1">created_at_retail_month</div>
<div class="t" style="left:2086.00px;top:775.01px;font-size:29px;line-height:36px;font-weight:normal;color:#4259A1;letter-spacing:0.390px;-webkit-text-stroke:0.4px #4259A1">created_at_retail_week</div>
<div class="t" style="left:761.00px;top:852.80px;font-size:29px;line-height:36px;font-weight:normal;color:#16164A;letter-spacing:1.842px;-webkit-text-stroke:0px #16164A">33,562</div>
<div class="t" style="left:1111.20px;top:852.80px;font-size:29px;line-height:36px;font-weight:normal;color:#16164A;letter-spacing:1.753px;-webkit-text-stroke:0px #16164A">2025-01-31 18:29:45</div>
<div class="t" style="left:1517.00px;top:852.80px;font-size:29px;line-height:36px;font-weight:normal;color:#16164A;letter-spacing:1.753px;-webkit-text-stroke:0px #16164A">2024-12-01 00:00:00</div>
<div class="t" style="left:2043.00px;top:852.80px;font-size:29px;line-height:36px;font-weight:normal;color:#16164A;letter-spacing:1.100px;-webkit-text-stroke:0px #16164A">52</div>
<div class="t" style="left:761.00px;top:926.80px;font-size:29px;line-height:36px;font-weight:normal;color:#16164A;letter-spacing:1.999px;-webkit-text-stroke:0px #16164A">3,078</div>
<div class="t" style="left:1111.20px;top:926.80px;font-size:29px;line-height:36px;font-weight:normal;color:#16164A;letter-spacing:1.753px;-webkit-text-stroke:0px #16164A">2025-01-31 20:54:48</div>
<div class="t" style="left:1517.00px;top:926.80px;font-size:29px;line-height:36px;font-weight:normal;color:#16164A;letter-spacing:1.753px;-webkit-text-stroke:0px #16164A">2024-12-01 00:00:00</div>
<div class="t" style="left:2043.00px;top:926.80px;font-size:29px;line-height:36px;font-weight:normal;color:#16164A;letter-spacing:1.100px;-webkit-text-stroke:0px #16164A">52</div>
<div class="t" style="left:761.00px;top:1000.80px;font-size:29px;line-height:36px;font-weight:normal;color:#16164A;letter-spacing:1.842px;-webkit-text-stroke:0px #16164A">20,398</div>
<div class="t" style="left:1111.20px;top:1000.80px;font-size:29px;line-height:36px;font-weight:normal;color:#16164A;letter-spacing:1.753px;-webkit-text-stroke:0px #16164A">2025-02-01 02:02:09</div>
<div class="t" style="left:1517.00px;top:1000.80px;font-size:29px;line-height:36px;font-weight:normal;color:#16164A;letter-spacing:1.753px;-webkit-text-stroke:0px #16164A">2024-12-01 00:00:00</div>
<div class="t" style="left:2043.00px;top:1000.80px;font-size:29px;line-height:36px;font-weight:normal;color:#16164A;letter-spacing:1.100px;-webkit-text-stroke:0px #16164A">52</div>
<div class="t" style="left:761.00px;top:1074.80px;font-size:29px;line-height:36px;font-weight:normal;color:#16164A;letter-spacing:1.842px;-webkit-text-stroke:0px #16164A">25,329</div>
<div class="t" style="left:1111.20px;top:1074.80px;font-size:29px;line-height:36px;font-weight:normal;color:#16164A;letter-spacing:1.753px;-webkit-text-stroke:0px #16164A">2025-02-01 04:41:49</div>
<div class="t" style="left:1517.00px;top:1074.80px;font-size:29px;line-height:36px;font-weight:normal;color:#16164A;letter-spacing:1.753px;-webkit-text-stroke:0px #16164A">2024-12-01 00:00:00</div>
<div class="t" style="left:2043.00px;top:1074.80px;font-size:29px;line-height:36px;font-weight:normal;color:#16164A;letter-spacing:1.100px;-webkit-text-stroke:0px #16164A">52</div>
<div class="t" style="left:761.00px;top:1148.80px;font-size:29px;line-height:36px;font-weight:normal;color:#16164A;letter-spacing:1.842px;-webkit-text-stroke:0px #16164A">24,986</div>
<div class="t" style="left:1111.20px;top:1148.80px;font-size:29px;line-height:36px;font-weight:normal;color:#16164A;letter-spacing:1.753px;-webkit-text-stroke:0px #16164A">2025-02-01 17:19:19</div>
<div class="t" style="left:1517.00px;top:1148.80px;font-size:29px;line-height:36px;font-weight:normal;color:#16164A;letter-spacing:1.753px;-webkit-text-stroke:0px #16164A">2024-12-01 00:00:00</div>
<div class="t" style="left:2043.00px;top:1148.80px;font-size:29px;line-height:36px;font-weight:normal;color:#16164A;letter-spacing:1.100px;-webkit-text-stroke:0px #16164A">52</div>
<div class="t" style="left:761.00px;top:1222.80px;font-size:29px;line-height:36px;font-weight:normal;color:#16164A;letter-spacing:1.999px;-webkit-text-stroke:0px #16164A">9,269</div>
<div class="t" style="left:1111.20px;top:1222.80px;font-size:29px;line-height:36px;font-weight:normal;color:#16164A;letter-spacing:1.753px;-webkit-text-stroke:0px #16164A">2025-02-01 18:03:51</div>
<div class="t" style="left:1517.00px;top:1222.80px;font-size:29px;line-height:36px;font-weight:normal;color:#16164A;letter-spacing:1.753px;-webkit-text-stroke:0px #16164A">2024-12-01 00:00:00</div>
<div class="t" style="left:2043.00px;top:1222.80px;font-size:29px;line-height:36px;font-weight:normal;color:#16164A;letter-spacing:1.100px;-webkit-text-stroke:0px #16164A">52</div>
<div class="t" style="left:760.00px;top:1296.80px;font-size:29px;line-height:36px;font-weight:normal;color:#16164A;letter-spacing:2.249px;-webkit-text-stroke:0px #16164A">7,986</div>
<div class="t" style="left:1111.20px;top:1296.80px;font-size:29px;line-height:36px;font-weight:normal;color:#16164A;letter-spacing:1.753px;-webkit-text-stroke:0px #16164A">2025-02-01 20:40:02</div>
<div class="t" style="left:1517.00px;top:1296.80px;font-size:29px;line-height:36px;font-weight:normal;color:#16164A;letter-spacing:1.753px;-webkit-text-stroke:0px #16164A">2024-12-01 00:00:00</div>
<div class="t" style="left:2043.00px;top:1296.80px;font-size:29px;line-height:36px;font-weight:normal;color:#16164A;letter-spacing:1.100px;-webkit-text-stroke:0px #16164A">52</div>
<div class="t" style="left:761.00px;top:1370.80px;font-size:29px;line-height:36px;font-weight:normal;color:#16164A;letter-spacing:1.842px;-webkit-text-stroke:0px #16164A">34,652</div>
<div class="t" style="left:1111.20px;top:1370.80px;font-size:29px;line-height:36px;font-weight:normal;color:#16164A;letter-spacing:1.753px;-webkit-text-stroke:0px #16164A">2025-02-02 01:35:21</div>
<div class="t" style="left:1517.00px;top:1370.80px;font-size:29px;line-height:36px;font-weight:normal;color:#16164A;letter-spacing:1.753px;-webkit-text-stroke:0px #16164A">2025-01-01 00:00:00</div>
<div class="t" style="left:2042.00px;top:1370.80px;font-size:29px;line-height:36px;font-weight:normal;color:#16164A;letter-spacing:0.300px;-webkit-text-stroke:0px #16164A">1</div>
<div class="t" style="left:761.00px;top:1444.80px;font-size:29px;line-height:36px;font-weight:normal;color:#16164A;letter-spacing:1.842px;-webkit-text-stroke:0px #16164A">35,961</div>
<div class="t" style="left:1111.20px;top:1444.80px;font-size:29px;line-height:36px;font-weight:normal;color:#16164A;letter-spacing:1.753px;-webkit-text-stroke:0px #16164A">2025-02-02 03:26:51</div>
<div class="t" style="left:1517.00px;top:1444.80px;font-size:29px;line-height:36px;font-weight:normal;color:#16164A;letter-spacing:1.753px;-webkit-text-stroke:0px #16164A">2025-01-01 00:00:00</div>
<div class="t" style="left:2042.00px;top:1444.80px;font-size:29px;line-height:36px;font-weight:normal;color:#16164A;letter-spacing:0.300px;-webkit-text-stroke:0px #16164A">1</div>
<div class="t" style="left:761.00px;top:1518.80px;font-size:29px;line-height:36px;font-weight:normal;color:#16164A;letter-spacing:1.642px;-webkit-text-stroke:0px #16164A">36,390</div>
<div class="t" style="left:1111.20px;top:1518.80px;font-size:29px;line-height:36px;font-weight:normal;color:#16164A;letter-spacing:1.753px;-webkit-text-stroke:0px #16164A">2025-02-02 03:49:14</div>
<div class="t" style="left:1517.00px;top:1518.80px;font-size:29px;line-height:36px;font-weight:normal;color:#16164A;letter-spacing:1.753px;-webkit-text-stroke:0px #16164A">2025-01-01 00:00:00</div>
<div class="t" style="left:2042.00px;top:1518.80px;font-size:29px;line-height:36px;font-weight:normal;color:#16164A;letter-spacing:0.300px;-webkit-text-stroke:0px #16164A">1</div>
<div class="t" style="left:761.00px;top:1592.80px;font-size:29px;line-height:36px;font-weight:normal;color:#16164A;letter-spacing:1.842px;-webkit-text-stroke:0px #16164A">29,542</div>
<div class="t" style="left:1111.20px;top:1592.80px;font-size:29px;line-height:36px;font-weight:normal;color:#16164A;letter-spacing:1.753px;-webkit-text-stroke:0px #16164A">2025-02-02 13:05:07</div>
<div class="t" style="left:1517.00px;top:1592.80px;font-size:29px;line-height:36px;font-weight:normal;color:#16164A;letter-spacing:1.753px;-webkit-text-stroke:0px #16164A">2025-01-01 00:00:00</div>
<div class="t" style="left:2042.00px;top:1592.80px;font-size:29px;line-height:36px;font-weight:normal;color:#16164A;letter-spacing:0.300px;-webkit-text-stroke:0px #16164A">1</div>
<div class="t" style="left:761.00px;top:1666.80px;font-size:29px;line-height:36px;font-weight:normal;color:#16164A;letter-spacing:1.999px;-webkit-text-stroke:0px #16164A">4,352</div>
<div class="t" style="left:1111.20px;top:1666.80px;font-size:29px;line-height:36px;font-weight:normal;color:#16164A;letter-spacing:1.753px;-webkit-text-stroke:0px #16164A">2025-02-02 14:38:17</div>
<div class="t" style="left:1517.00px;top:1666.80px;font-size:29px;line-height:36px;font-weight:normal;color:#16164A;letter-spacing:1.753px;-webkit-text-stroke:0px #16164A">2025-01-01 00:00:00</div>
<div class="t" style="left:2042.00px;top:1666.80px;font-size:29px;line-height:36px;font-weight:normal;color:#16164A;letter-spacing:0.300px;-webkit-text-stroke:0px #16164A">1</div>
<div class="t" style="left:761.00px;top:1740.80px;font-size:29px;line-height:36px;font-weight:normal;color:#16164A;letter-spacing:1.642px;-webkit-text-stroke:0px #16164A">34,064</div>
<div class="t" style="left:1111.20px;top:1740.80px;font-size:29px;line-height:36px;font-weight:normal;color:#16164A;letter-spacing:1.753px;-webkit-text-stroke:0px #16164A">2025-02-02 15:59:34</div>
<div class="t" style="left:1517.00px;top:1740.80px;font-size:29px;line-height:36px;font-weight:normal;color:#16164A;letter-spacing:1.753px;-webkit-text-stroke:0px #16164A">2025-01-01 00:00:00</div>
<div class="t" style="left:2042.00px;top:1740.80px;font-size:29px;line-height:36px;font-weight:normal;color:#16164A;letter-spacing:0.300px;-webkit-text-stroke:0px #16164A">1</div>
</body></html>
